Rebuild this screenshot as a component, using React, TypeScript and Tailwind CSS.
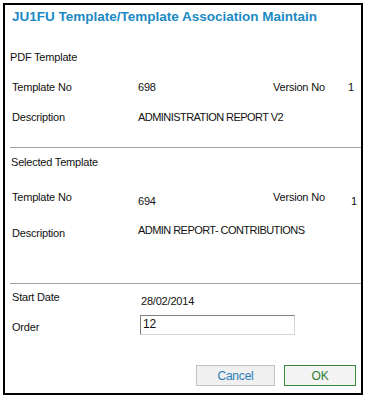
import React from 'react'

const font = { fontFamily: '"Liberation Sans", Arial, sans-serif' }

export default function App() {
  return (
    <div className="w-[367px] h-[398px] bg-white pt-[3px] pl-[3px] text-[11px] text-[#111] tracking-[-0.2px]" style={font}>
      <div className="w-[360px] h-[392px] border-2 border-black flex flex-col">
        <div className="pt-[3px] pl-[7px] h-[20px] text-[13.5px] leading-[17px] font-bold tracking-normal text-[#1b8ac4]">
          JU1FU Template/Template Association Maintain
        </div>

        <div className="mt-[25px] pl-[5px] leading-[14px]">PDF Template</div>

        <div className="mt-[16px] pl-[7px] flex leading-[14px]">
          <div className="w-[126px]">Template No</div>
          <div className="w-[135px]">698</div>
          <div className="w-[75px]">Version No</div>
          <div>1</div>
        </div>

        <div className="mt-[16px] pl-[7px] flex leading-[14px]">
          <div className="w-[126px]">Description</div>
          <div className="tracking-[-0.55px]">ADMINISTRATION REPORT V2</div>
        </div>

        <div className="mt-[23px] ml-[5px] h-px bg-[#a3a3a3]" />

        <div className="mt-[7px] pl-[6px] leading-[14px]">Selected Template</div>

        <div className="mt-[21px] pl-[7px] flex items-start leading-[14px]">
          <div className="w-[126px]">Template No</div>
          <div className="w-[135px] mt-[4px]">694</div>
          <div className="w-[78px]">Version No</div>
          <div className="mt-[4px]">1</div>
        </div>

        <div className="mt-[15px] pl-[7px] flex items-start leading-[14px]">
          <div className="w-[126px] mt-[3px]">Description</div>
          <div className="tracking-[-0.55px]">ADMIN REPORT- CONTRIBUTIONS</div>
        </div>

        <div className="mt-[43px] ml-[5px] h-px bg-[#a3a3a3]" />

        <div className="mt-[6px] pl-[7px] flex items-start leading-[14px]">
          <div className="w-[129px]">Start Date</div>
          <div className="mt-[4px]">28/02/2014</div>
        </div>

        <div className="mt-[7px] pl-[7px] flex items-start leading-[14px]">
          <div className="w-[128px] mt-[5px]">Order</div>
          <div className="w-[155px] h-[20px] border border-t-[#808080] border-l-[#808080] border-r-[#d4d4d4] border-b-[#d4d4d4] pl-[2px] text-[12px] leading-[16px]">
            12
          </div>
        </div>

        <div className="mt-[30px] flex justify-end gap-[9px] pr-[5px]">
          <button className="w-[79px] h-[21px] bg-[#f0f0f0] border border-[#c2c2c2] text-[12px] text-[#2b7db8]" style={font}>
            Cancel
          </button>
          <button className="w-[72px] h-[21px] bg-[#f4f4f4] border border-[#3b8a3b] text-[12px] text-[#2e7d32]" style={font}>
            OK
          </button>
        </div>
      </div>
    </div>
  )
}
